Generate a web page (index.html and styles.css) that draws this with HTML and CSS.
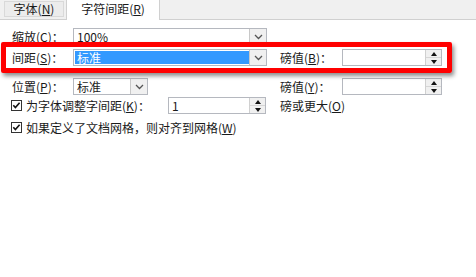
FILE: index.html
```html
<!DOCTYPE html>
<html lang="zh-CN">
<head>
<meta charset="utf-8">
<link rel="stylesheet" href="styles.css">
</head>
<body>
<div class="tabbar">
  <div class="tab">字体(<u>N</u>)</div>
  <div class="tab active">字符间距(<u>R</u>)</div>
</div>
<div class="content">
  <div class="row r1">
    <span class="label">缩放(<u>C</u>)：</span>
    <div class="combo w194"><span class="val">100%</span><span class="drop"><svg width="9" height="6" viewBox="0 0 9 6"><path d="M1 1 L4.5 4.5 L8 1" fill="none" stroke="#555" stroke-width="1.3"/></svg></span></div>
  </div>
  <div class="row r2">
    <span class="label">间距(<u>S</u>)：</span>
    <div class="combo w194"><span class="val sel">标准</span><span class="drop"><svg width="9" height="6" viewBox="0 0 9 6"><path d="M1 1 L4.5 4.5 L8 1" fill="none" stroke="#555" stroke-width="1.3"/></svg></span></div>
    <span class="label rlabel">磅值(<u>B</u>)：</span>
    <div class="spin w100"><span class="val"></span><span class="arrows"><span class="up"></span><span class="dn"></span></span></div>
  </div>
  <div class="row r3">
    <span class="label">位置(<u>P</u>)：</span>
    <div class="combo w75"><span class="val">标准</span><span class="drop"><svg width="9" height="6" viewBox="0 0 9 6"><path d="M1 1 L4.5 4.5 L8 1" fill="none" stroke="#555" stroke-width="1.3"/></svg></span></div>
    <span class="label rlabel r3l">磅值(<u>Y</u>)：</span>
    <div class="spin w100"><span class="val"></span><span class="arrows"><span class="up"></span><span class="dn"></span></span></div>
  </div>
  <div class="row r4">
    <span class="check"><svg width="11" height="11" viewBox="0 0 11 11"><rect x="0.5" y="0.5" width="10" height="10" fill="#fff" stroke="#333"/><path d="M2.3 5.3 L4.4 7.6 L8.6 2.8" fill="none" stroke="#111" stroke-width="1.6"/></svg></span>
    <span class="ctext">为字体调整字间距(<u>K</u>)：</span>
    <div class="spin w98"><span class="val">1</span><span class="arrows"><span class="up"></span><span class="dn"></span></span></div>
    <span class="after">磅或更大(<u>O</u>)</span>
  </div>
  <div class="row r5">
    <span class="check"><svg width="11" height="11" viewBox="0 0 11 11"><rect x="0.5" y="0.5" width="10" height="10" fill="#fff" stroke="#333"/><path d="M2.3 5.3 L4.4 7.6 L8.6 2.8" fill="none" stroke="#111" stroke-width="1.6"/></svg></span>
    <span class="ctext">如果定义了文档网格，则对齐到网格(<u>W</u>)</span>
  </div>
</div>
<div class="highlight"></div>
</body>
</html>
```
FILE: styles.css
```css
html, body {
  margin: 0;
  padding: 0;
  background: #fff;
}
body {
  width: 476px;
  height: 277px;
  overflow: hidden;
  font-family: "Noto Sans CJK SC", "Noto Sans", sans-serif;
  font-size: 12px;
  color: #1a1a1a;
  position: relative;
}
.tabbar {
  background: #f0f0f0;
  border-bottom: 1px solid #d0d0d0;
  display: flex;
  align-items: flex-start;
  box-sizing: border-box;
  height: 20px;
}
.tab {
  margin-left: 4px;
  margin-top: 1px;
  height: 16px;
  width: 60px;
  box-sizing: border-box;
  border: 1px solid #d9d9d9;
  background: #ececec;
  display: flex;
  align-items: center;
  justify-content: center;
  line-height: 14px;
}
.tab.active {
  margin-left: 2px;
  margin-top: 0;
  width: 94px;
  height: 20px;
  background: #fff;
  border: 1px solid #d0d0d0;
  border-top: none;
  border-bottom: none;
  padding-bottom: 3px;
}
u { text-decoration: underline; text-underline-offset: 1px; }
.content {
  position: relative;
  padding-left: 12px;
  padding-top: 8px;
}
.row {
  display: flex;
  align-items: center;
  height: 17px;
}
.r2 { margin-top: 4px; }
.r3 { margin-top: 12px; }
.r4 { margin-top: 2px; }
.r5 { margin-top: 5px; }
.label {
  width: 61px;
  white-space: nowrap;
  line-height: 17px;
}
.rlabel {
  margin-left: 13px;
  width: 62px;
}
.r3l { margin-left: 132px; }
.combo, .spin {
  height: 17px;
  box-sizing: border-box;
  border: 1px solid #b5b8bf;
  background: #fff;
  display: flex;
  align-items: stretch;
}
.w194 { width: 194px; }
.w75 { width: 75px; }
.w100 { width: 100px; }
.w98 { width: 98px; }
.val {
  flex: 1;
  padding-left: 3px;
  line-height: 15px;
  white-space: nowrap;
}
.val.sel {
  background: #3399ff;
  color: #fff;
  margin: 1px 0 1px 1px;
  line-height: 13px;
  padding-left: 2px;
}
.drop {
  width: 16px;
  background: #f0f0f0;
  border-left: 1px solid #c8c8c8;
  display: flex;
  align-items: center;
  justify-content: center;
}
.arrows {
  width: 15px;
  display: flex;
  flex-direction: column;
  border-left: 1px solid #d0d0d0;
  background: #f0f0f0;
}
.up, .dn {
  flex: 1;
  display: flex;
  align-items: center;
  justify-content: center;
}
.up { border-bottom: 1px solid #d6d6d6; }
.up::after {
  content: "";
  border-left: 3.5px solid transparent;
  border-right: 3.5px solid transparent;
  border-bottom: 4px solid #111;
}
.dn::after {
  content: "";
  border-left: 3.5px solid transparent;
  border-right: 3.5px solid transparent;
  border-top: 4px solid #111;
}
.check {
  width: 11px;
  height: 11px;
  margin-left: -1px;
  display: flex;
}
.ctext {
  margin-left: 4px;
  white-space: nowrap;
  line-height: 17px;
}
.r4 .ctext { width: 140px; }
.r4 .spin { margin-left: 2px; }
.after {
  margin-left: 14px;
  white-space: nowrap;
}
.highlight {
  position: absolute;
  left: 1px;
  top: 42px;
  width: 451px;
  height: 31px;
  box-sizing: border-box;
  border: 5px solid #ff0000;
  border-radius: 2px;
  box-shadow: 2px 3px 4px rgba(0,0,0,0.45);
  pointer-events: none;
}
```
